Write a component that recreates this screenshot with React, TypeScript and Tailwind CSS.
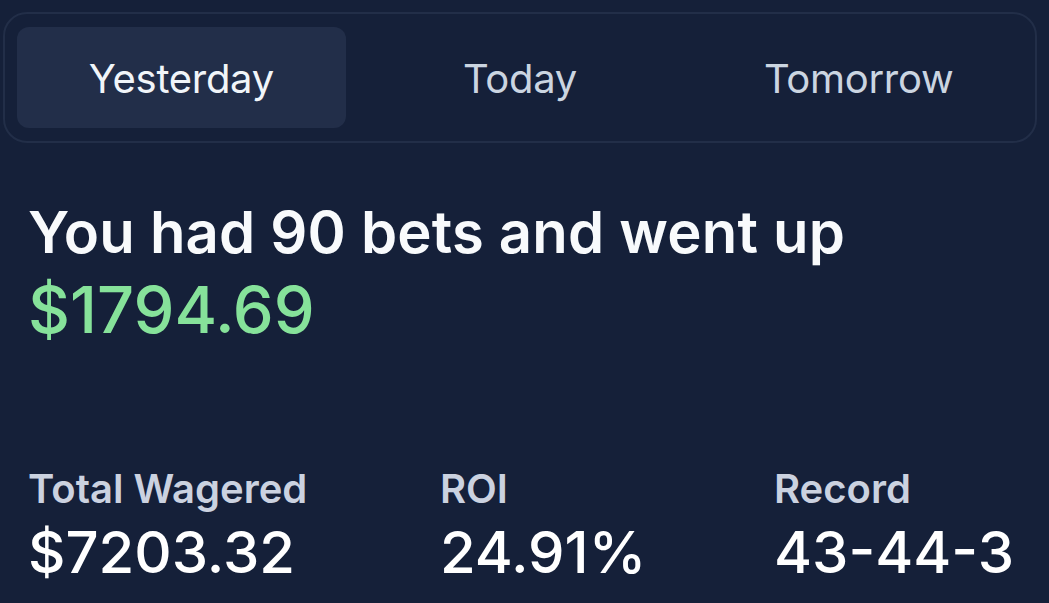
import React from "react";

const tabs = ["Yesterday", "Today", "Tomorrow"];

const stats = [
  { label: "Total Wagered", value: "$7203.32" },
  { label: "ROI", value: "24.91%" },
  { label: "Record", value: "43-44-3" },
];

export default function App() {
  const active = "Yesterday";
  return (
    <div className="w-[1049px] h-[603px] overflow-hidden bg-[#152039] font-['Inter',sans-serif] pt-[12px]">
      <div className="ml-[3px] w-[1034px] h-[131px] rounded-[24px] border-2 border-[#222e48] px-[12px] py-[13px] grid grid-cols-3 gap-[10px]">
        {tabs.map((t) => (
          <div
            key={t}
            className={`flex items-center justify-center rounded-[12px] text-[40px] pt-[2px] tracking-[-0.3px] ${
              t === active ? "bg-[#222e49] text-[#f1f5f9]" : "text-[#cbd5e1]"
            }`}
          >
            {t}
          </div>
        ))}
      </div>

      <div className="px-[28px] pt-[50px]">
        <h1 className="text-[58px] leading-[78px] font-semibold text-[#f8fafc] tracking-[0.2px]">
          You had 90 bets and went up
        </h1>
        <div className="text-[65px] leading-[70px] font-medium text-[#86e29a] pt-[4px]">
          $1794.69
        </div>
      </div>

      <div className="px-[28px] pt-[120px] flex">
        {stats.map((s, i) => (
          <div key={s.label} className={i === 0 ? "w-[412px]" : i === 1 ? "w-[334px]" : ""}>
            <div className="text-[40px] leading-[48px] font-semibold text-[#cbd2e0]">{s.label}</div>
            <div className="text-[58px] leading-[70px] font-medium text-white pt-[4px]">{s.value}</div>
          </div>
        ))}
      </div>
    </div>
  );
}
